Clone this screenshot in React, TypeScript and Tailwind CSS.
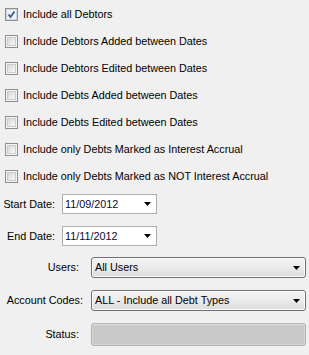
import React from 'react'

const font = { fontFamily: '"Liberation Sans", Arial, sans-serif' }

type CheckProps = { label: string; checked?: boolean }

function CheckRow({ label, checked }: CheckProps) {
  return (
    <div className="flex h-[27px] items-center">
      <div className="ml-[5px] flex h-[13px] w-[13px] items-center justify-center border border-[#8e8f8f] bg-[#f4f4f4]">
        {checked ? (
          <svg width="11" height="11" viewBox="0 0 11 11" className="block">
            <rect x="0.5" y="0.5" width="10" height="10" fill="#eef1f5" stroke="#d2d6dc" />
            <path d="M2.5 5.5 L4.5 8 L8.5 2.5" fill="none" stroke="#3a5aa8" strokeWidth="1.8" />
          </svg>
        ) : (
          <div className="h-[9px] w-[9px] border border-[#c9ccd1] bg-gradient-to-br from-[#d4d6da] to-[#fafafa]" />
        )}
      </div>
      <span className="ml-[5px] text-[10.8px] leading-none text-black">{label}</span>
    </div>
  )
}

function DateBox({ value }: { value: string }) {
  return (
    <div className="flex h-[20px] w-[95px] items-center justify-between border border-[#abadb3] bg-white pl-[2px] pr-[5px]">
      <span className="text-[10.8px] leading-none text-[#0a0a2a]">{value}</span>
      <svg width="7" height="4" viewBox="0 0 7 4" className="block">
        <path d="M0 0 H7 L3.5 4 Z" fill="#000" />
      </svg>
    </div>
  )
}

function Combo({ value }: { value: string }) {
  return (
    <div className="flex h-[21px] w-[215px] items-center justify-between rounded-[3px] border border-[#707070] bg-gradient-to-b from-[#f3f3f3] via-[#ebebeb] to-[#dcdcdc] pl-[3px] pr-[5px] shadow-[inset_0_0_0_1px_#fcfcfc]">
      <span className="text-[10.8px] leading-none text-black">{value}</span>
      <svg width="7" height="4" viewBox="0 0 7 4" className="block">
        <path d="M0 0 H7 L3.5 4 Z" fill="#000" />
      </svg>
    </div>
  )
}

export default function App() {
  const checks = [
    'Include all Debtors',
    'Include Debtors Added between Dates',
    'Include Debtors Edited between Dates',
    'Include Debts Added between Dates',
    'Include Debts Edited between Dates',
    'Include only Debts Marked as Interest Accrual',
    'Include only Debts Marked as NOT Interest Accrual',
  ]
  return (
    <div className="h-[355px] w-[309px] overflow-hidden bg-[#f0f0f0]" style={font}>
      <div className="flex flex-col pt-[1px]">
        {checks.map((c, i) => (
          <CheckRow key={c} label={c} checked={i === 0} />
        ))}
      </div>

      {/* dates */}
      <div className="mt-[4px] flex flex-col gap-[12px]">
        <div className="flex items-center">
          <span className="w-[55px] text-right text-[10.8px] text-black">Start Date:</span>
          <div className="ml-[7px]">
            <DateBox value="11/09/2012" />
          </div>
        </div>
        <div className="flex items-center">
          <span className="w-[55px] text-right text-[10.8px] text-black">End Date:</span>
          <div className="ml-[7px]">
            <DateBox value="11/11/2012" />
          </div>
        </div>
      </div>

      {/* lookups */}
      <div className="mt-[11px] flex flex-col gap-[12px]">
        <div className="flex items-center">
          <span className="w-[79px] text-right text-[10.8px] text-black">Users:</span>
          <div className="ml-[12px]">
            <Combo value="All Users" />
          </div>
        </div>
        <div className="flex items-center">
          <span className="w-[83px] text-right text-[10.8px] text-black">Account Codes:</span>
          <div className="ml-[8px]">
            <Combo value="ALL - Include all Debt Types" />
          </div>
        </div>
        <div className="flex items-center">
          <span className="w-[79px] text-right text-[10.8px] text-black">Status:</span>
          <div className="ml-[12px] h-[23px] w-[215px] rounded-[3px] border border-[#b2b2b2] bg-[#c9c9c9] shadow-[inset_0_1px_0_#e0e0e0,inset_0_0_0_1px_#d6d6d6]" />
        </div>
      </div>
    </div>
  )
}
